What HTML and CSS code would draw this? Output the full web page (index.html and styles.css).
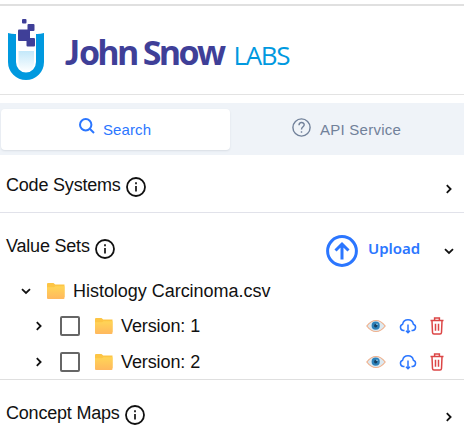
FILE: index.html
```html
<!DOCTYPE html>
<html lang="en">
<head>
<meta charset="utf-8">
<title>Terminology Browser</title>
<link rel="stylesheet" href="styles.css">
</head>
<body>
<svg class="defs" aria-hidden="true">
  <defs>
    <linearGradient id="folderFill" x1="0" y1="0" x2="0" y2="1"><stop offset="0" stop-color="#ffd556"/><stop offset="1" stop-color="#ffb85e"/></linearGradient>
    <linearGradient id="liquid" x1="0" y1="0" x2="0" y2="1"><stop offset="0" stop-color="#c3e8fa"/><stop offset="1" stop-color="#ffffff"/></linearGradient>
    <symbol id="info" viewBox="0 0 20 20"><circle cx="10" cy="10" r="9" fill="none" stroke="#111" stroke-width="1.8"/><path d="M10 9v5.5M10 5.2v2" stroke="#111" stroke-width="1.7"/></symbol>
    <symbol id="right" viewBox="0 0 8 12"><path d="M1.8 2.200L5.600 6 1.800 9.800" fill="none" stroke="#111" stroke-width="1.800"/></symbol>
    <symbol id="down" viewBox="0 0 12 8"><path d="M2 2.200L6 6l4-3.800" fill="none" stroke="#111" stroke-width="1.800"/></symbol>
    <symbol id="folder" viewBox="0 0 18 16"><path d="M0 1Q0 0 1 0h5.500l1.700 1.500H17.500V14H0z" fill="#fdc545"/><path d="M0 4.200h7l1.500-1H17.500V15q0 1-1 1H1q-1 0-1-1z" fill="url(#folderFill)"/></symbol>
    <symbol id="eye" viewBox="0 0 20 14"><path d="M.8 7Q5 1.500 10 1.500T19.200 7Q15 12.500 10 12.500T.8 7z" fill="#dce9f1" stroke="#efb08c" stroke-width="1.200"/><circle cx="9.700" cy="6.700" r="4.100" fill="#2c80b8"/><circle cx="9.700" cy="6.700" r="1.700" fill="#153f61"/><circle cx="11" cy="5.300" r=".8" fill="#a9d5ed"/></symbol>
    <symbol id="cloud" viewBox="0 0 18 15"><path d="M5.500 11.500H4.300A3.200 3.200 0 0 1 3.600 5.300 5.500 5.500 0 0 1 14.400 5.300 3.200 3.200 0 0 1 13.700 11.500h-1.200M9 5.500v8M7 11.700l2 2 2-2" fill="none" stroke="#2b76ff" stroke-width="1.500"/></symbol>
    <symbol id="trash" viewBox="0 0 14 18"><path d="M.5 3.600h13M4.600 3.300V.9h4.800v2.400M2 4l.5 11.500q.1 1.500 1.500 1.500h6q1.400 0 1.500-1.500L12 4M5.500 6.700v7M8.500 6.700v7" fill="none" stroke="#dc4545" stroke-width="1.500"/></symbol>
  </defs>
</svg>
<header class="brand">
  <svg class="logo" viewBox="0 0 300 88">
    <path class="tube" d="M8 27q4 1.200 8 1V56a10 10.500 0 0 0 20 0V28q4 .2 8-1V56a18 18 0 0 1-36 0z"/>
    <path fill="url(#liquid)" d="M18.500 45H34v12a7.700 9 0 0 1-15.500 0z"/>
    <g class="ink"><rect x="22" y="13" width="4.500" height="4.500" rx="1"/><rect x="27.500" y="18" width="7" height="7" rx="1"/><rect x="18" y="23.500" width="12" height="11.500" rx="1"/><rect x="26.500" y="32" width="8.500" height="8.500" rx="1"/></g>
    <text class="name j" x="65" y="58.500">J</text>
    <text class="name" x="79" y="58.500" textLength="147" lengthAdjust="spacing">ohn Snow</text>
    <text class="labs" x="233.500" y="58.500" textLength="57" lengthAdjust="spacing">LABS</text>
  </svg>
</header>
<nav class="tabs">
  <div class="tab active">
    <svg class="search" viewBox="0 0 16 16"><circle cx="6.700" cy="6.700" r="5.700"/><path d="M11 11l4 4"/></svg><span>Search</span>
  </div>
  <div class="tab api">
    <svg class="help" viewBox="0 0 19 19"><circle cx="9.500" cy="9.500" r="8.600"/><path d="M7 7.300c0-3.700 5.200-3.500 5.200-.5 0 2-2.700 2-2.700 4.700M9.500 13.200v1.500"/></svg><span>API Service</span>
  </div>
</nav>
<main>
  <section class="section codes">
    <span class="title code-title">Code Systems</span><svg class="info"><use href="#info"/></svg>
    <svg class="right end"><use href="#right"/></svg>
  </section>
  <section class="values">
    <div class="section value-head">
      <span class="title value-title">Value Sets</span><svg class="info"><use href="#info"/></svg>
      <div class="upload"><svg viewBox="0 0 32 32"><circle cx="16" cy="16" r="14.400"/><path d="M16 24.500V10M9.500 15.500L16 9l6.500 6.500"/></svg><b>Upload</b></div>
      <svg class="down"><use href="#down"/></svg>
    </div>
    <div class="file"><svg class="down"><use href="#down"/></svg><svg class="folder"><use href="#folder"/></svg><span class="file-name">Histology Carcinoma.csv</span></div>
    <div class="version"><svg class="right"><use href="#right"/></svg><i class="box"></i><svg class="folder"><use href="#folder"/></svg><span>Version: 1</span><div class="actions"><svg class="eye"><use href="#eye"/></svg><svg class="cloud"><use href="#cloud"/></svg><svg class="trash"><use href="#trash"/></svg></div></div>
    <div class="version"><svg class="right"><use href="#right"/></svg><i class="box"></i><svg class="folder"><use href="#folder"/></svg><span>Version: 2</span><div class="actions"><svg class="eye"><use href="#eye"/></svg><svg class="cloud"><use href="#cloud"/></svg><svg class="trash"><use href="#trash"/></svg></div></div>
  </section>
  <section class="section maps">
    <span class="title map-title">Concept Maps</span><svg class="info"><use href="#info"/></svg>
    <svg class="right end"><use href="#right"/></svg>
  </section>
</main>
</body>
</html>
```
FILE: styles.css
```css
* { box-sizing: border-box; }
body { margin: 0; padding-top: 4px; height: 432px; overflow: hidden; background: #fff; color: #111; font: 18px/22px "Liberation Sans", Arial, sans-serif; }
svg { display: block; flex: none; }
.defs { position: absolute; width: 0; height: 0; }
.brand { height: 91px; border-top: 2px solid #e0e0e0; border-bottom: 1px solid #e3e3e3; }
.logo { width: 300px; height: 88px; }
.tube { fill: #0099df; }
.ink, .name { fill: #3f3f98; }
.name { font: 700 34px "Open Sans", sans-serif; }
.name.j { font: 900 34px Lato, sans-serif; }
.labs { font: 400 26px "Open Sans", sans-serif; fill: #0099df; }
.tabs { display: grid; grid-template-columns: 229px 1fr; height: 52px; margin-top: 8px; padding: 6px 0 5px 1px; background: #eff3f8; color: #71819a; font-size: 15px; }
.tab { display: flex; align-items: flex-start; padding: 10px 0 0 62px; }
.tab span { line-height: 22px; }
.tab svg { fill: none; stroke: currentColor; }
.active { padding: 9px 0 0 78px; border-radius: 4px; background: #fff; color: #2b76ff; box-shadow: 0 1px 2px #d8dde4; }
.active span { margin: 1px 0 0 8px; letter-spacing: .1px; }
.api span { letter-spacing: .25px; }
.search { width: 16px; height: 16px; stroke-width: 2; }
.help { width: 19px; height: 19px; margin: -1px 9px 0 0; stroke-width: 1.4; }
.section { display: flex; align-items: flex-start; padding-left: 6px; }
.codes { height: 58px; padding-top: 19px; border-bottom: 1px solid #e1e2ea; }
.info { width: 20px; height: 20px; margin: 3px 0 0 6px; }
.right { width: 8px; height: 12px; }
.down { width: 12px; height: 8px; }
.end { margin: 9px 11px 0 auto; }
.code-title { width: 114px; }
.value-title { width: 83px; }
.map-title { width: 113px; }
.title { white-space: nowrap; letter-spacing: -.2px; }
.file-name { white-space: nowrap; letter-spacing: -.03px; }
.values { height: 167px; border-bottom: 1px solid #dfdfdf; }
.value-head { height: 61px; padding-top: 22px; }
.value-head > .info { margin-top: 4px; }
.upload { display: flex; margin-left: auto; color: #2b76ff; font: 600 15px/22px "Noto Sans", sans-serif; }
.upload svg { width: 32px; height: 32px; margin-right: 10px; fill: none; stroke: currentColor; stroke-width: 3; }
.upload b { width: 53px; margin-top: 2px; font-weight: 600; }
.value-head > .down { margin: 12px 9px 0 22px; }
.file { display: flex; align-items: center; height: 34px; padding-left: 20px; }
.file .folder { margin: 0 8px 0 15px; }
.folder { width: 18px; height: 16px; }
.version { display: flex; align-items: center; height: 36px; padding-left: 35px; letter-spacing: -.1px; }
.box { width: 20px; height: 20px; margin: 0 15px 0 17px; border: 2px solid #666; border-radius: 2px; }
.version .folder { margin-right: 8px; }
.actions { display: flex; align-items: center; margin-left: auto; padding-right: 20px; }
.eye { width: 20px; height: 14px; margin-right: 13px; }
.cloud { width: 18px; height: 15px; margin-right: 13px; }
.trash { width: 14px; height: 18px; }
.maps { padding-top: 22px; }
```
